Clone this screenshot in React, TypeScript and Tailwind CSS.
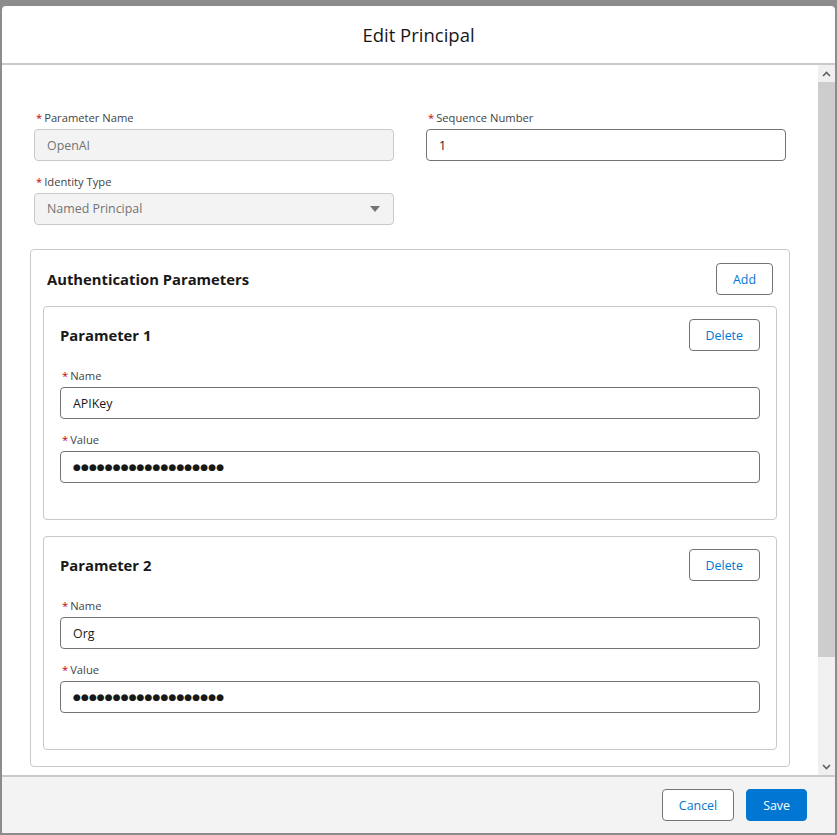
import React from 'react';

const dots = '●'.repeat(19);

const Label = ({ children }: { children: React.ReactNode }) => (
  <label className="block pt-1 mb-0.5 text-[11.2px] leading-[18px] text-[#444444]">
    <abbr title="required" className="no-underline text-[#ba0517] mx-0.5">*</abbr>
    {children}
  </label>
);

const TextInput = ({ value }: { value: string }) => (
  <input
    readOnly
    value={value}
    className="block w-full h-8 rounded border border-[#747474] bg-white pl-3 pr-4 pt-px text-[12.4px] text-[#181818] outline-none"
  />
);

const SecretInput = () => (
  <input
    readOnly
    value={dots}
    className="block w-full h-8 rounded border border-[#747474] bg-white pl-3 pr-4 font-['DejaVu_Sans',sans-serif] text-[9px] tracking-[0.1px] text-[#181818] outline-none"
  />
);

const OutlineButton = ({ children }: { children: React.ReactNode }) => (
  <button className="h-8 px-4 pt-[2px] rounded border border-[#747474] bg-white text-[12.4px] text-[#0176d3]">
    {children}
  </button>
);

const ParameterCard = ({ index, name }: { index: number; name: string }) => (
  <div className="rounded border border-[#c9c9c9] bg-white px-4 pt-3 pb-9">
    <div className="flex h-8 items-center justify-between">
      <h3 className="pt-px text-[14.8px] font-bold text-[#181818]">Parameter {index}</h3>
      <OutlineButton>Delete</OutlineButton>
    </div>
    <div className="mt-3 flex flex-col gap-2">
      <div>
        <Label>Name</Label>
        <TextInput value={name} />
      </div>
      <div>
        <Label>Value</Label>
        <SecretInput />
      </div>
    </div>
  </div>
);

const Chevron = ({ up }: { up?: boolean }) => (
  <svg width="9" height="6" viewBox="0 0 9 6" fill="none" stroke="#606060" strokeWidth="1.6">
    {up ? <polyline points="1,5 4.5,1.5 8,5" /> : <polyline points="1,1 4.5,4.5 8,1" />}
  </svg>
);

export default function App() {
  return (
    <div className="w-[837px] h-[835px] overflow-hidden bg-[#8c8c8c] pt-[6px] pl-[2px] font-['Open_Sans','Noto_Sans',sans-serif]">
      <div className="flex h-[827px] w-[833px] flex-col overflow-hidden rounded-t bg-white">
        {/* Header */}
        <header className="flex h-[59px] shrink-0 items-center justify-center border-b-2 border-[#c9c9c9] pt-px">
          <h2 className="text-[18.5px] text-[#181818]">Edit Principal</h2>
        </header>

        {/* Body + scrollbar */}
        <div className="flex h-[710px] shrink-0">
          <div className="flex-1 overflow-hidden px-[28px] pt-10 pb-10">
            <div className="grid grid-cols-2 gap-x-8 gap-y-2 px-1">
              <div>
                <Label>Parameter Name</Label>
                <input
                  readOnly
                  value="OpenAI"
                  className="block w-full h-8 rounded border border-[#c9c9c9] bg-[#f3f3f3] pl-3 pr-4 pt-px text-[12.4px] text-[#747474] outline-none"
                />
              </div>
              <div>
                <Label>Sequence Number</Label>
                <TextInput value="1" />
              </div>
              <div>
                <Label>Identity Type</Label>
                <div className="flex h-8 items-center justify-between rounded border border-[#c9c9c9] bg-[#f3f3f3] pl-3 pr-[13px]">
                  <span className="pt-px text-[12.4px] text-[#747474]">Named Principal</span>
                  <svg width="10" height="6" viewBox="0 0 10 6">
                    <polygon points="0,0 10,0 5,6" fill="#747474" />
                  </svg>
                </div>
              </div>
            </div>

            <section className="mt-6 rounded border border-[#c9c9c9] bg-white">
              <div className="flex h-[45px] items-end px-4">
                <div className="flex h-8 w-full items-center justify-between">
                  <h2 className="pt-px text-[14.8px] font-bold text-[#181818]">Authentication Parameters</h2>
                  <OutlineButton>Add</OutlineButton>
                </div>
              </div>
              <div className="flex flex-col gap-4 px-3 pt-[11px] pb-4">
                <ParameterCard index={1} name="APIKey" />
                <ParameterCard index={2} name="Org" />
              </div>
            </section>
          </div>

          {/* Scrollbar */}
          <div className="flex w-[17px] flex-col bg-[#f0f0f0]">
            <div className="flex h-[17px] items-center justify-center">
              <Chevron up />
            </div>
            <div className="h-[575px] bg-[#cdcdcd]" />
            <div className="flex-1" />
            <div className="flex h-[17px] items-center justify-center">
              <Chevron />
            </div>
          </div>
        </div>

        {/* Footer */}
        <footer className="flex flex-1 items-center justify-end gap-3 border-t-2 border-[#c9c9c9] bg-[#f3f3f3] pr-[28px]">
          <OutlineButton>Cancel</OutlineButton>
          <button className="h-8 px-4 pt-[2px] rounded border border-[#0176d3] bg-[#0176d3] text-[12.4px] text-white">Save</button>
        </footer>
      </div>
    </div>
  );
}
